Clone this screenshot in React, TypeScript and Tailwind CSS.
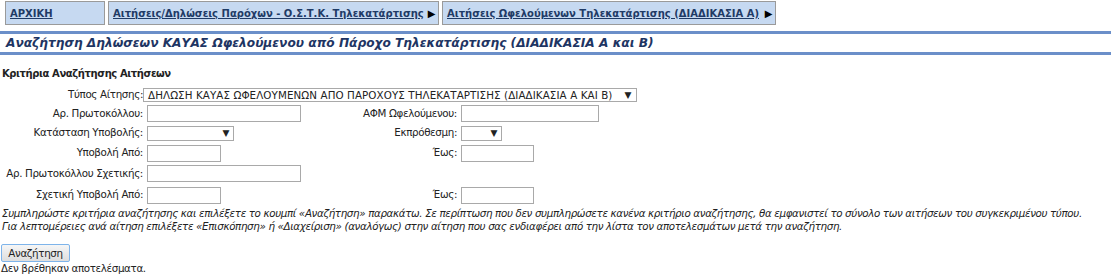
import { ReactNode } from "react"

const font = { fontFamily: "Verdana, 'DejaVu Sans', sans-serif" }

function Tab({ label, arrow, w }: { label: string; arrow?: boolean; w: string }) {
  return (
    <div className={`shrink-0 flex items-center justify-between h-[24px] border border-[#9a9a9a] bg-[#c6d9f1] pl-[4px] pr-[3px] ${w}`}>
      <a href="#" className="font-bold underline text-[#1f3b66] text-[10px] tracking-normal whitespace-nowrap">
        {label}
      </a>
      {arrow && <span className="shrink-0 text-[10px] text-black">▶</span>}
    </div>
  )
}

function Label({ children }: { children: ReactNode }) {
  return <div className="flex items-center justify-end text-right text-[#222] pr-[2px] whitespace-nowrap">{children}</div>
}

function Field({ w, select }: { w: string; select?: boolean }) {
  if (select)
    return (
      <div className="flex items-center">
        <div className={`ml-[2px] h-[15px] border border-[#a9a9a9] bg-white flex items-center justify-end pr-[4px] ${w}`}>
          <span className="text-[9px] leading-none">▼</span>
        </div>
      </div>
    )
  return (
    <div className="flex items-center">
      <div className={`ml-[2px] h-[17px] border border-[#a9a9a9] bg-white ${w}`} />
    </div>
  )
}

export default function App() {
  return (
    <div className="w-[1111px] h-[280px] bg-white text-[10.3px] tracking-[-0.35px] text-[#222] overflow-hidden" style={font}>
      <nav className="flex gap-[3px] pl-[5px] pt-[1px]">
        <Tab label="ΑΡΧΙΚΗ" w="w-[100px]" />
        <Tab label="Αιτήσεις/Δηλώσεις Παρόχων - Ο.Σ.Τ.Κ. Τηλεκατάρτισης" arrow w="w-[331px]" />
        <Tab label="Αιτήσεις Ωφελούμενων Τηλεκατάρτισης (ΔΙΑΔΙΚΑΣΙΑ Α)" arrow w="w-[334px]" />
      </nav>

      <div className="mt-[6px] border-t-[3px] border-b-[3px] border-[#6b8fc9] h-[24px] flex items-center pl-[6px]">
        <h1 className="italic font-bold text-[12.2px] tracking-normal text-[#1e3563] whitespace-nowrap">
          Αναζήτηση Δηλώσεων ΚΑΥΑΣ Ωφελούμενου από Πάροχο Τηλεκατάρτισης (ΔΙΑΔΙΚΑΣΙΑ Α και Β)
        </h1>
      </div>

      <div className="mt-[12px] pl-[2px] font-bold text-[10px] tracking-[-0.4px] h-[14px] leading-[14px]">Κριτήρια Αναζήτησης Αιτήσεων</div>

      <div className="mt-[5px] grid grid-cols-[145px_170px_144px_1fr] grid-rows-[18px_19px_20px_20px_21px_22px]">
        <Label>Τύπος Αίτησης:</Label>
        <div className="col-span-3 flex items-center">
          <div className="-ml-[2px] w-[494px] h-[14px] border border-[#a9a9a9] bg-white flex items-center justify-between pl-[4px] pr-[5px] overflow-hidden">
            <span className="leading-none whitespace-nowrap tracking-[0.1px]">ΔΗΛΩΣΗ ΚΑΥΑΣ ΩΦΕΛΟΥΜΕΝΩΝ ΑΠΟ ΠΑΡΟΧΟΥΣ ΤΗΛΕΚΑΤΑΡΤΙΣΗΣ (ΔΙΑΔΙΚΑΣΙΑ Α ΚΑΙ Β)</span>
            <span className="text-[9px] leading-none">▼</span>
          </div>
        </div>

        <Label>Αρ. Πρωτοκόλλου:</Label>
        <Field w="w-[154px]" />
        <Label>ΑΦΜ Ωφελούμενου:</Label>
        <Field w="w-[138px]" />

        <Label>Κατάσταση Υποβολής:</Label>
        <Field w="w-[87px]" select />
        <Label>Εκπρόθεσμη:</Label>
        <Field w="w-[41px]" select />

        <Label>Υποβολή Από:</Label>
        <Field w="w-[74px]" />
        <Label>Έως:</Label>
        <Field w="w-[73px]" />

        <Label>Αρ. Πρωτοκόλλου Σχετικής:</Label>
        <Field w="w-[154px]" />
        <div />
        <div />

        <Label>Σχετική Υποβολή Από:</Label>
        <Field w="w-[74px]" />
        <Label>Έως:</Label>
        <Field w="w-[73px]" />
      </div>

      <div className="pl-[2px] italic leading-[13px] mt-[1px] whitespace-nowrap">
        <p>
          Συμπληρώστε κριτήρια αναζήτησης και επιλέξετε το κουμπί «Αναζήτηση» παρακάτω. Σε περίπτωση που δεν συμπληρώσετε κανένα κριτήριο αναζήτησης, θα εμφανιστεί το σύνολο των αιτήσεων του συγκεκριμένου τύπου.
        </p>
        <p>
          Για λεπτομέρειες ανά αίτηση επιλέξετε «Επισκόπηση» ή «Διαχείριση» (αναλόγως) στην αίτηση που σας ενδιαφέρει από την λίστα τον αποτελεσμάτων μετά την αναζήτηση.
        </p>
      </div>

      <button className="mt-[11px] ml-[1px] w-[69px] h-[18px] border border-[#7eb4ea] rounded-[2px] bg-gradient-to-b from-[#f6f6f6] to-[#dedede] text-[10.3px] text-[#222] leading-none">
        Αναζήτηση
      </button>
      <div className="pl-[1px] leading-[13px]">Δεν βρέθηκαν αποτελέσματα.</div>
    </div>
  )
}
